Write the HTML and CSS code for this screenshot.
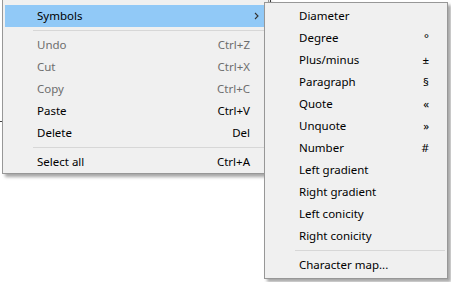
FILE: index.html
```html
<!DOCTYPE html>
<html>
<head>
    <meta charset="UTF-8" />
    <meta name="viewport" content="width=device-width, initial-scale=1.0">
    <link rel="stylesheet" href="styles.css">
</head>
<body>

    <div class="desk">

        <span class="mark mark-left"></span>
        <span class="mark mark-top"></span>

        <ul class="menu menu-main">
            <li class="item active">
                <span class="label">Symbols</span>
                <svg class="arrow" width="5" height="8" viewBox="0 0 5 8"><path d="M1 1 L4 4 L1 7" fill="none" stroke="#333" stroke-width="1.1"/></svg>
            </li>
            <li class="sep"></li>
            <li class="item disabled"><span class="label">Undo</span><span class="key">Ctrl+Z</span></li>
            <li class="item disabled"><span class="label">Cut</span><span class="key">Ctrl+X</span></li>
            <li class="item disabled"><span class="label">Copy</span><span class="key">Ctrl+C</span></li>
            <li class="item"><span class="label">Paste</span><span class="key">Ctrl+V</span></li>
            <li class="item"><span class="label">Delete</span><span class="key">Del</span></li>
            <li class="sep"></li>
            <li class="item"><span class="label">Select all</span><span class="key">Ctrl+A</span></li>
        </ul>

        <ul class="menu menu-sub">
            <li class="item"><span class="label">Diameter</span></li>
            <li class="item"><span class="label">Degree</span><span class="key">°</span></li>
            <li class="item"><span class="label">Plus/minus</span><span class="key">±</span></li>
            <li class="item"><span class="label">Paragraph</span><span class="key">§</span></li>
            <li class="item"><span class="label">Quote</span><span class="key">«</span></li>
            <li class="item"><span class="label">Unquote</span><span class="key">»</span></li>
            <li class="item"><span class="label">Number</span><span class="key">#</span></li>
            <li class="item"><span class="label">Left gradient</span></li>
            <li class="item"><span class="label">Right gradient</span></li>
            <li class="item"><span class="label">Left conicity</span></li>
            <li class="item"><span class="label">Right conicity</span></li>
            <li class="sep"></li>
            <li class="item"><span class="label">Character map...</span></li>
        </ul>

    </div>

</body>
</html>
```

FILE: styles.css
```css
* {
    margin: 0;
    padding: 0;
    box-sizing: border-box;
}

body {
    background: #fff;
    font-family: "Noto Sans", "Liberation Sans", sans-serif;
    font-size: 11.5px;
    color: #000;
}

.desk {
    position: relative;
    width: 451px;
    height: 282px;
    overflow: hidden;
}

.mark {
    position: absolute;
    background: #444;
}

.mark-left {
    left: 0;
    top: 121px;
    width: 2px;
    height: 1px;
}

.mark-top {
    left: 270px;
    top: 0;
    width: 1px;
    height: 2px;
}

.menu {
    position: absolute;
    list-style: none;
    background: #f0f0f0;
    border: 1px solid #979797;
    box-shadow: 3px 3px 3px rgba(0, 0, 0, .35);
}

.menu-main {
    left: 2px;
    top: -1px;
    width: 267px;
    padding: 5px 2px 0;
}

.menu-sub {
    left: 264px;
    top: 2px;
    width: 184px;
    padding: 2px;
}

.item {
    height: 22px;
    display: flex;
    align-items: center;
    padding: 0 16px 1px 32px;
    white-space: nowrap;
}

.item .label {
    flex: 1;
}

.item.active {
    background: #91c9f7;
}

.item.disabled {
    color: #6d6d6d;
}

.arrow {
    margin-right: -9px;
}

.sep {
    height: 1px;
    margin: 3px 0 3px 28px;
    background: #d7d7d7;
}
```
